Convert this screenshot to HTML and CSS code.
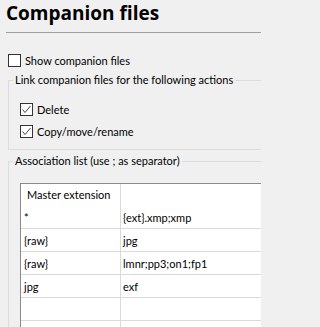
FILE: index.html
```html
<!DOCTYPE html>
<html>
<head>
<meta charset="utf-8">
<link rel="stylesheet" href="styles.css">
</head>
<body>
<div class="page">
  <div class="header"><h1 class="title">Companion files</h1></div>
  <label class="check top-check"><span class="box"></span><span>Show companion files</span></label>
  <fieldset class="group group-link">
    <legend class="legend">Link companion files for the following actions</legend>
    <label class="check"><span class="box"><svg viewBox="0 0 13 13" width="13" height="13"><path d="M2.5 6.5 L5 9.5 L10.5 3" fill="none" stroke="#444" stroke-width="1"/></svg></span><span>Delete</span></label>
    <label class="check"><span class="box"><svg viewBox="0 0 13 13" width="13" height="13"><path d="M2.5 6.5 L5 9.5 L10.5 3" fill="none" stroke="#444" stroke-width="1"/></svg></span><span>Copy/move/rename</span></label>
  </fieldset>
  <fieldset class="group group-assoc">
    <legend class="legend">Association list (use ; as separator)</legend>
    <div class="grid">
      <div class="row head"><div class="cell c1">Master extension</div><div class="cell c2"></div></div>
      <div class="row"><div class="cell c1">*</div><div class="cell c2">{ext}.xmp;xmp</div></div>
      <div class="row"><div class="cell c1">{raw}</div><div class="cell c2">jpg</div></div>
      <div class="row"><div class="cell c1">{raw}</div><div class="cell c2">lmnr;pp3;on1;fp1</div></div>
      <div class="row"><div class="cell c1">jpg</div><div class="cell c2">exf</div></div>
      <div class="row"><div class="cell c1"></div><div class="cell c2"></div></div>
      <div class="row"><div class="cell c1"></div><div class="cell c2"></div></div>
    </div>
  </fieldset>
</div>
</body>
</html>
```
FILE: styles.css
```css
html, body {
  margin: 0;
  padding: 0;
  background: #f0f0f0;
}
body {
  font-family: Lato, "Open Sans", sans-serif;
  font-size: 11px;
  color: #000;
}
.page {
  width: 261px;
  height: 327px;
  overflow: hidden;
}
.header {
  margin-left: 6px;
  height: 33px;
  border-bottom: 1px solid #a0a0a0;
  box-sizing: border-box;
}
.title {
  margin: 0;
  font-family: "Open Sans", "Noto Sans", sans-serif;
  font-size: 19px;
  font-weight: 700;
  line-height: 26px;
}
.check {
  display: flex;
  align-items: center;
  height: 13px;
  gap: 4px;
  line-height: 13px;
}
.top-check {
  margin: 21px 0 0 8px;
}
.box {
  width: 13px;
  height: 13px;
  box-sizing: border-box;
  border: 1px solid #333;
  background: #fff;
  display: block;
  flex: none;
}
.box svg {
  display: block;
  margin: -1px;
}
.group {
  margin: 0 -60px 0 8px;
  border: 1px solid #dcdcdc;
  padding: 0 0 0 4px;
  min-width: 0;
}
.legend {
  padding: 0 2px;
  line-height: 14px;
}
.group-link {
  margin-top: 6px;
  padding-top: 16px;
  padding-bottom: 11px;
}
.group-link .check {
  margin-left: 7px;
}
.group-link .check + .check {
  margin-top: 9px;
}
.group-assoc {
  margin-top: 4px;
  padding-top: 15px;
  padding-bottom: 40px;
}
.grid {
  margin-left: 7px;
  border: 1px solid #8a8a8a;
  background: #fff;
  width: 320px;
}
.row {
  display: flex;
  height: 23px;
  box-sizing: border-box;
  border-bottom: 1px solid #dadada;
}
.row.head {
  border-bottom: none;
  height: 22px;
}
.cell {
  height: 22px;
  line-height: 22px;
  padding: 1px 3px 0;
  white-space: nowrap;
  box-sizing: border-box;
}
.c1 {
  width: 100px;
  flex: none;
  border-right: 1px solid #dadada;
}
.head .cell {
  padding-top: 0;
}
.head .c1 {
  padding-left: 6px;
}
.c2 {
  flex: 1;
  padding-left: 2px;
}
```
